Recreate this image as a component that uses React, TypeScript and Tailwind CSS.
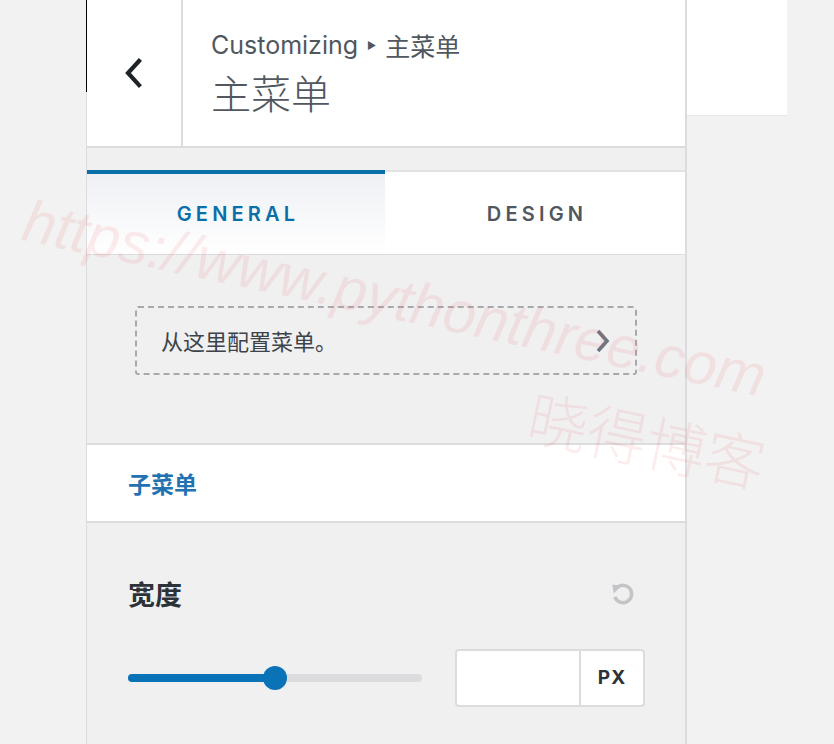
import React from "react";

const latin = { fontFamily: 'Inter, "Noto Sans", "Noto Sans CJK SC", sans-serif' };
const cjk = { fontFamily: '"Noto Sans CJK SC", "Noto Sans", sans-serif' };

export default function App() {
  return (
    <div className="relative w-[834px] h-[744px] overflow-hidden bg-[#f2f2f2] flex" style={latin}>
      <div className="w-[86px] shrink-0" />
      <div className="w-[601px] shrink-0 h-full flex flex-col border-l border-r-2 border-[#dcdcde] bg-[#f0f0f1]">
        {/* header */}
        <div className="h-[148px] shrink-0 flex bg-white border-b-2 border-[#dcdcde]">
          <div className="w-[96px] shrink-0 flex items-center justify-center border-r-2 border-[#dcdcde]">
            <svg width="22" height="32" viewBox="0 0 22 32" fill="none">
              <polyline points="16,4 5,16 16,28" stroke="#1d2327" strokeWidth="4.2" strokeLinecap="square" strokeLinejoin="miter" />
            </svg>
          </div>
          <div className="flex flex-col pl-[28px] pt-[28px]">
            <div className="text-[25px] leading-[34px] text-[#50575e] flex items-center" style={latin}>
              <span>Customizing</span>
              <span className="text-[10px] mx-[9px] text-[#50575e]">▶</span>
              <span style={cjk}>主菜单</span>
            </div>
            <div className="text-[40px] leading-[60px] text-[#50575e] font-light" style={cjk}>主菜单</div>
          </div>
        </div>
        {/* band */}
        <div className="h-[22px] shrink-0 bg-[#f0f0f1]" />
        {/* tabs */}
        <div className="h-[85px] shrink-0 flex border-b border-[#dcdcde]">
          <div className="w-[298px] border-t-4 border-[#0a6fa8] bg-gradient-to-b from-[#eef0f4] to-white flex items-center justify-center">
            <span className="text-[20px] font-semibold tracking-[4.2px] text-[#0a6fa8] pl-[4px]">GENERAL</span>
          </div>
          <div className="flex-1 bg-white border-t-2 border-[#e2e2e4] flex items-center justify-center pt-[1px]">
            <span className="text-[20px] font-semibold tracking-[4.2px] text-[#50575e] pl-[4px]">DESIGN</span>
          </div>
        </div>
        {/* menu box section */}
        <div className="h-[190px] shrink-0 bg-[#f0f0f1] border-b-2 border-[#dcdcde] pt-[51px] px-[48px]">
          <div className="h-[69px] border-2 border-dashed border-[#a7aaad] rounded-[3px] flex items-center justify-between pl-[24px] pr-[24px]">
            <span className="text-[22px] text-[#3c434a]" style={cjk}>从这里配置菜单。</span>
            <svg width="16" height="26" viewBox="0 0 16 26" fill="none">
              <polyline points="3,3 12,13 3,23" stroke="#6c7781" strokeWidth="3.6" />
            </svg>
          </div>
        </div>
        {/* submenu heading */}
        <div className="h-[78px] shrink-0 bg-white border-b-2 border-[#dcdcde] flex items-center pl-[41px]">
          <span className="text-[23px] font-bold text-[#2271b1]" style={cjk}>子菜单</span>
        </div>
        {/* width control */}
        <div className="flex-1 bg-[#f0f0f1] pl-[41px] pr-[40px] pt-[50px]">
          <div className="flex items-center justify-between h-[42px]">
            <span className="text-[27px] font-bold text-[#2c3338]" style={cjk}>宽度</span>
            <svg width="26" height="26" viewBox="0 0 24 24" fill="none" className="mr-[9px]">
              <path d="M6.34 6.34 A8 8 0 1 1 4.48 14.74" stroke="#c3c4c7" strokeWidth="3.2" fill="none" />
              <polygon points="2.2,3.2 10.6,4.4 3.4,11.6" fill="#c3c4c7" />
            </svg>
          </div>
          <div className="flex items-center mt-[34px]">
            <div className="relative w-[294px] h-[8px] rounded-full bg-[#dcdcde]">
              <div className="absolute left-0 top-0 h-[8px] w-[148px] rounded-full bg-[#0a73b8]" />
              <div className="absolute left-[135px] top-[-8px] w-[24px] h-[24px] rounded-full bg-[#0a73b8]" />
            </div>
            <div className="ml-[33px] w-[190px] h-[58px] flex bg-white border-2 border-[#dcdcde] rounded-[4px]">
              <div className="w-[124px] border-r-2 border-[#dcdcde]" />
              <div className="flex-1 flex items-center justify-center text-[19px] font-bold tracking-[1px] text-[#2c3338]">PX</div>
            </div>
          </div>
        </div>
      </div>
      {/* preview */}
      <div className="w-[100px] h-[116px] shrink-0 bg-white border-b border-[#e8e8e8]" />

      {/* black edge line */}
      <div className="absolute left-[86px] top-0 w-[1px] h-[92px] bg-black" />

      {/* watermark */}
      <div className="pointer-events-none absolute left-[24px] top-[176px] origin-left rotate-[12deg] text-[59px] italic font-light text-[rgba(235,80,80,0.11)] whitespace-nowrap" style={{ fontFamily: '"Liberation Sans", sans-serif' }}>
        https://www.pythonthree.com
      </div>
      <div className="pointer-events-none absolute left-[530px] top-[368px] origin-left rotate-[12deg] text-[60px] font-light text-[rgba(235,80,80,0.11)] whitespace-nowrap" style={cjk}>
        晓得博客
      </div>
    </div>
  );
}
